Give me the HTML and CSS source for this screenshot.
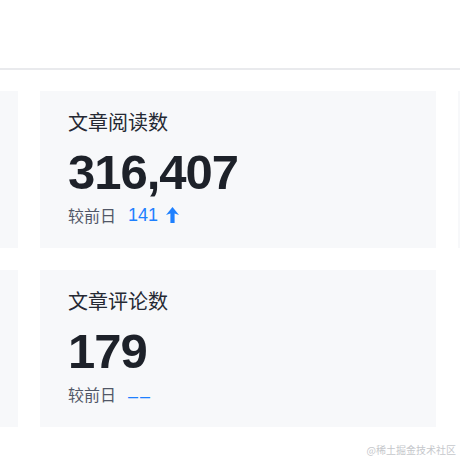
FILE: index.html
```html
<!DOCTYPE html>
<html lang="zh-CN">
<head>
<meta charset="utf-8">
<link rel="stylesheet" href="styles.css">
</head>
<body>
<header class="topbar"></header>
<main class="content">
  <div class="grid">
    <section class="card"></section>
    <section class="card">
      <div class="title">文章阅读数</div>
      <div class="value">316,407</div>
      <div class="delta">
        <span class="label">较前日</span>
        <span class="num">141</span>
        <svg class="arrow" width="13" height="16" viewBox="0 0 13 16"><path d="M6.5 0 L13 8 L8.6 6.6 L8.6 16 L4.4 16 L4.4 6.6 L0 8 Z" fill="#1e80ff"/></svg>
      </div>
    </section>
    <section class="card"></section>
    <section class="card"></section>
    <section class="card">
      <div class="title">文章评论数</div>
      <div class="value">179</div>
      <div class="delta">
        <span class="label">较前日</span>
        <span class="num dash">––</span>
      </div>
    </section>
  </div>
</main>
<div class="watermark">@稀土掘金技术社区</div>
</body>
</html>
```
FILE: styles.css
```css
html, body {
  margin: 0;
  padding: 0;
  background: #fff;
  font-family: "Liberation Sans", "Noto Sans CJK SC", sans-serif;
  width: 460px;
  height: 460px;
  overflow: hidden;
}
.topbar {
  height: 68px;
  background: #fff;
  border-bottom: 2px solid #e9eaed;
}
.content {
  padding-top: 21px;
  overflow: hidden;
}
.grid {
  display: grid;
  grid-template-columns: repeat(3, 396px);
  gap: 22px;
  margin-left: -378px;
}
.card {
  background: #f7f8fa;
  height: 157px;
  box-sizing: border-box;
  padding: 17px 28px 0 28px;
}
.title {
  font-size: 20px;
  line-height: 28px;
  color: #252933;
  font-family: "Noto Sans CJK SC", sans-serif;
}
.value {
  margin-top: 8px;
  font-size: 49px;
  line-height: 56px;
  font-weight: bold;
  letter-spacing: -1px;
  color: #1d2129;
}
.delta {
  margin-top: 3px;
  display: flex;
  align-items: center;
  height: 24px;
}
.label {
  font-size: 16px;
  color: #515767;
  font-family: "Noto Sans CJK SC", sans-serif;
}
.num {
  margin-left: 12px;
  font-size: 18px;
  color: #1e80ff;
}
.arrow {
  margin-left: 8px;
}
.dash {
  letter-spacing: 2px;
  font-size: 18px;
  position: relative;
  top: 2px;
}
.watermark {
  position: absolute;
  right: 4px;
  bottom: 3px;
  font-size: 10px;
  color: #c6c8cc;
  font-family: "Noto Sans CJK SC", sans-serif;
}
```
